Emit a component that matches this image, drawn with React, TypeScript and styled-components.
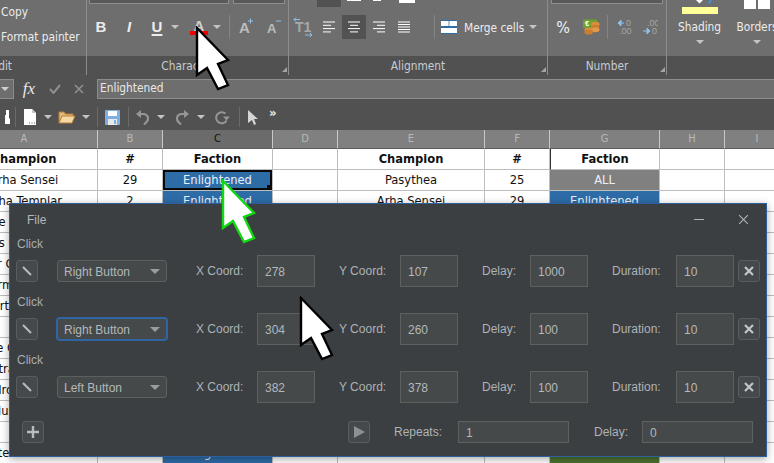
import styled, { createGlobalStyle } from "styled-components";

/**
 * Types
 */
type Fill = "blue" | "gray" | "green";

type CellData = {
  text?: string;
  fill?: Fill;
};

type SheetRow = CellData[];

/**
 * Data
 */
const columns = ["A", "B", "C", "D", "E", "F", "G", "H", "I"];
const columnWidths = [147, 65, 110, 65, 147, 65, 110, 65, 65];

const blue = (text: string): CellData => ({ text, fill: "blue" });
const left = (text: string): SheetRow => [{ text }];

const rows: SheetRow[] = [
  [{ text: "Arha Sensei" }, { text: "29" }, blue("Enlightened"), {}, { text: "Pasythea" }, { text: "25" }, { text: "ALL", fill: "gray" }],
  [{ text: "Arha Templar" }, { text: "2" }, blue("Enlightened"), {}, { text: "Arha Sensei" }, { text: "29" }, blue("Enlightened")],
  left("Blade Knight Lord"),
  left("Elders Crusader Elf"),
  left("Elder Crusader Elf"),
  left("Storm Guardian"),
  left("Mort Guardian"),
  [],
  left("Blade Crusader Elf"),
  left("Astral Warrior"),
  left("Wild Ironclad Rider"),
  left("Julius Hunters"),
  [],
  [{ text: "Master Shartha II" }, { text: "2" }, blue("Enlightened"), {}, { text: "Nut" }, { text: "5" }, { text: "Exabound", fill: "green" }],
];

const fillColors: Record<Fill, string> = {
  blue: "#2e6ca8",
  gray: "#808080",
  green: "#4d7330",
};

const clickRows = [
  { button: "Right Button", x: "278", y: "107", delay: "1000", focused: false },
  { button: "Right Button", x: "304", y: "260", delay: "100", focused: true },
  { button: "Left Button", x: "382", y: "378", delay: "100", focused: false },
];

/**
 * Styled
 */
const GlobalStyle = createGlobalStyle`
  html, body {
    margin: 0;
    padding: 0;
    background: #515151;
  }
`;

const Page = styled.div`
  position: relative;
  width: 774px;
  height: 463px;
  overflow: hidden;
  font-family: "DejaVu Sans", sans-serif;
  font-stretch: condensed;
  font-size: 11.8px;
`;

const Ribbon = styled.div`
  display: flex;
  height: 79px;
  box-sizing: border-box;
  padding-bottom: 4px;
  background: #515151;
  overflow: hidden;
`;

const Group = styled.div<{ $width: number; $last?: boolean }>`
  flex: none;
  display: flex;
  flex-direction: column;
  width: ${(p) => p.$width}px;
  box-sizing: content-box;
  border-right: ${(p) => (p.$last ? "none" : "1px solid #8c8c8c")};
`;

const GroupBody = styled.div`
  height: 56px;
  background: #6e6e6e;
`;

const GroupLabel = styled.div`
  position: relative;
  height: 19px;
  line-height: 20px;
  text-align: center;
  color: #c6ccd2;
  white-space: nowrap;
  overflow: hidden;
`;

const EditLabel = styled(GroupLabel)`
  display: flex;
  justify-content: flex-end;
  padding-right: 74px;
`;

const Launcher = styled.span`
  position: absolute;
  right: 1px;
  bottom: 3px;
  width: 0;
  height: 0;
  border-left: 5px solid transparent;
  border-bottom: 5px solid #a5a5a5;
`;

const Strip = styled.div`
  display: flex;
  align-items: flex-start;
  height: 9px;
`;

const ComboEdge = styled.div<{ $width: number; $ml: number }>`
  width: ${(p) => p.$width}px;
  height: 4px;
  margin-left: ${(p) => p.$ml}px;
  box-sizing: border-box;
  background: #5a5a5a;
  border: 1px solid #8e8e8e;
  border-top: none;
`;

const StripBit = styled.div<{ $width: number; $height: number; $ml: number; $color: string }>`
  width: ${(p) => p.$width}px;
  height: ${(p) => p.$height}px;
  margin-left: ${(p) => p.$ml}px;
  background: ${(p) => p.$color};
`;

const MainRow = styled.div`
  display: flex;
  align-items: center;
  height: 36px;
`;

const Tool = styled.div<{ $width: number; $ml?: number; $active?: boolean }>`
  flex: none;
  display: flex;
  align-items: center;
  justify-content: center;
  width: ${(p) => p.$width}px;
  height: 24px;
  margin-left: ${(p) => p.$ml || 0}px;
  background: ${(p) => (p.$active ? "#525252" : "transparent")};
  color: #ececec;
`;

const FontGlyph = styled.span<{ $italic?: boolean; $underline?: boolean }>`
  margin-top: -2px;
  font-family: "Liberation Sans", sans-serif;
  font-size: 15px;
  font-weight: 700;
  font-style: ${(p) => (p.$italic ? "italic" : "normal")};
  text-decoration: ${(p) => (p.$underline ? "underline" : "none")};
  text-underline-offset: 2px;
  text-decoration-thickness: 2px;
`;

const ColorGlyph = styled.div`
  position: relative;
  margin-top: -3px;
  font-family: "Liberation Sans", sans-serif;
  font-size: 15px;
  font-weight: 700;
  color: #cfcfcf;
  line-height: 17px;
`;

const ColorBar = styled.div`
  position: absolute;
  left: -4px;
  top: 14px;
  width: 18px;
  height: 4px;
  background: #f00000;
`;

const PercentGlyph = styled.span`
  font-size: 16px;
  color: #f0f0f0;
`;

const MergeLabel = styled.span`
  margin: 2px 0 0 7px;
  color: #ececec;
  white-space: nowrap;
`;

const ToolSep = styled.div<{ $ml: number; $height?: number; $color?: string }>`
  flex: none;
  width: 1px;
  height: ${(p) => p.$height || 24}px;
  margin-left: ${(p) => p.$ml}px;
  background: ${(p) => p.$color || "#848484"};
`;

const Caret = styled.span<{ $ml?: number; $color?: string; $size?: number }>`
  flex: none;
  width: 0;
  height: 0;
  margin-left: ${(p) => p.$ml || 0}px;
  border-left: ${(p) => p.$size || 4}px solid transparent;
  border-right: ${(p) => p.$size || 4}px solid transparent;
  border-top: ${(p) => p.$size || 4}px solid ${(p) => p.$color || "#c4c4c4"};
`;

const ClipboardList = styled.div`
  display: flex;
  flex-direction: column;
  gap: 8px;
  padding: 4px 0 0 1px;
  color: #ececec;
  white-space: nowrap;
  line-height: 17px;
`;

const BigTools = styled.div`
  display: flex;
`;

const BigTool = styled.div<{ $width: number }>`
  flex: none;
  display: flex;
  flex-direction: column;
  align-items: center;
  width: ${(p) => p.$width}px;
  color: #ececec;
`;

const BigIconArea = styled.div`
  display: flex;
  justify-content: center;
  height: 17px;
`;

const BigLabel = styled.div`
  height: 20px;
  line-height: 20px;
  white-space: nowrap;
`;

const BigCaret = styled(Caret)`
  margin-top: 3px;
`;

const FormulaBar = styled.div`
  display: flex;
  align-items: flex-start;
  height: 21px;
  background: #515151;
`;

const NameBox = styled.div`
  flex: none;
  display: flex;
  align-items: center;
  justify-content: center;
  width: 14px;
  height: 20px;
  box-sizing: border-box;
  padding-right: 3px;
  background: #6e6e6e;
  border: 1px solid #8c8c8c;
  border-left: none;
`;

const FormulaTool = styled.div<{ $width: number }>`
  flex: none;
  display: flex;
  align-items: center;
  justify-content: center;
  width: ${(p) => p.$width}px;
  height: 20px;
`;

const FxGlyph = styled.span`
  font-family: "Liberation Serif", serif;
  font-style: italic;
  font-size: 17px;
  color: #e8e8e8;
`;

const FormulaInput = styled.div`
  flex: 1;
  height: 20px;
  box-sizing: border-box;
  padding-left: 2px;
  line-height: 17px;
  color: #e8e8e8;
  background: #6e6e6e;
  border: 1px solid #8c8c8c;
  border-right: none;
`;

const QuickBar = styled.div`
  display: flex;
  align-items: center;
  height: 30px;
  box-sizing: border-box;
  padding-top: 4px;
  background: #515151;
`;

const Slot = styled.div<{ $width: number }>`
  flex: none;
  display: flex;
  align-items: center;
  justify-content: center;
  width: ${(p) => p.$width}px;
  height: 22px;
`;

const MoreGlyph = styled.span`
  margin: -8px 0 0 3px;
  font-size: 13px;
  font-weight: 700;
  color: #eeeeee;
  line-height: 14px;
`;

const Sheet = styled.div`
  display: grid;
  grid-template-columns: ${columnWidths.map((w) => `${w}px`).join(" ")};
  grid-auto-rows: 21px;
  width: 839px;
  margin-left: -49px;
  background: #ffffff;
`;

const ColumnHead = styled.div<{ $active?: boolean }>`
  height: 19px;
  box-sizing: border-box;
  text-align: center;
  line-height: 18px;
  font-size: 11px;
  color: ${(p) => (p.$active ? "#111111" : "#b9b9b9")};
  background: ${(p) => (p.$active ? "#6b6b6b" : "#808080")};
  border-right: 1px solid #c8c8c8;
  border-bottom: 1px solid #5c5c5c;
`;

const HeadRow = styled.div`
  display: grid;
  grid-template-columns: ${columnWidths.map((w) => `${w}px`).join(" ")};
  width: 839px;
  margin-left: -49px;
`;

const Cell = styled.div<{ $fill?: Fill; $bold?: boolean; $markLeft?: boolean; $selected?: boolean }>`
  position: relative;
  box-sizing: border-box;
  overflow: hidden;
  text-align: center;
  white-space: nowrap;
  font-size: 12.8px;
  line-height: 19px;
  font-weight: ${(p) => (p.$bold ? 700 : 400)};
  color: ${(p) => (p.$fill ? "#e9f0f6" : "#111111")};
  background: ${(p) => (p.$fill ? fillColors[p.$fill] : "#ffffff")};
  border-right: 1px solid #bdbdbd;
  border-bottom: 1px solid #bdbdbd;
  border-left: ${(p) => (p.$markLeft ? "1px solid #333333" : "none")};
  ${(p) => (p.$selected ? "box-shadow: inset 0 0 0 2px #0a0a0a;" : "")}
`;

const CellHandle = styled.span`
  position: absolute;
  right: 0;
  bottom: 0;
  width: 5px;
  height: 5px;
  background: #0a0a0a;
`;

const Dialog = styled.div`
  position: absolute;
  left: 9px;
  top: 203px;
  width: 758px;
  height: 254px;
  box-sizing: border-box;
  background: #3c3f41;
  border: 1px solid #2d5f9a;
  box-shadow: 0 2px 8px rgba(0, 0, 0, 0.35);
  font-family: "Liberation Sans", sans-serif;
  font-stretch: normal;
  font-size: 12px;
  color: #adb2b6;
`;

const TitleBar = styled.div`
  display: flex;
  align-items: center;
  height: 25px;
  box-sizing: border-box;
  padding: 6px 17px 0 17px;
`;

const MenuLabel = styled.span`
  color: #b4b8bb;
`;

const WindowButtons = styled.div`
  display: flex;
  align-items: center;
  gap: 34px;
  margin-left: auto;
`;

const ClickLabel = styled.div`
  height: 26px;
  box-sizing: border-box;
  padding: 5px 0 0 7px;
  line-height: 20px;
  color: #a8adb1;
`;

const ClickRow = styled.div`
  display: grid;
  grid-template-columns: 41px 110px 90px 58px 85px 58px 72px 58px 88px 58px 26px;
  align-items: center;
  height: 32px;
  padding-left: 6px;
`;

const IconButton = styled.div`
  display: flex;
  align-items: center;
  justify-content: center;
  width: 22px;
  height: 22px;
  box-sizing: border-box;
  background: #46494b;
  border: 1px solid #5a5d5f;
  border-radius: 3px;
`;

const RemoveCell = styled.div`
  display: flex;
  justify-content: flex-end;
`;

const SelectBox = styled.div<{ $focused?: boolean }>`
  display: flex;
  align-items: center;
  justify-content: space-between;
  height: 22px;
  box-sizing: border-box;
  padding: 1px 6px 0 6px;
  color: #b4b8bb;
  background: #45494a;
  border: 1px solid ${(p) => (p.$focused ? "#2f65a0" : "#5e6060")};
  border-radius: 3px;
  ${(p) => (p.$focused ? "box-shadow: 0 0 0 1px #2f65a0;" : "")}
`;

const FieldLabel = styled.div<{ $pad: number }>`
  padding-left: ${(p) => p.$pad}px;
  white-space: nowrap;
`;

const Field = styled.div`
  height: 32px;
  box-sizing: border-box;
  padding: 1px 0 0 7px;
  line-height: 30px;
  color: #b4b8bb;
  background: #45494a;
  border: 1px solid #5e6060;
`;

const Footer = styled.div`
  display: flex;
  align-items: center;
  justify-content: space-between;
  height: 22px;
  margin-top: 18px;
  padding: 0 13px 0 12px;
`;

const FooterRight = styled.div`
  display: flex;
  align-items: center;
`;

const FooterLabel = styled.div<{ $width: number; $pad: number }>`
  width: ${(p) => p.$width}px;
  box-sizing: border-box;
  padding-left: ${(p) => p.$pad}px;
`;

const FooterField = styled(Field)`
  width: 111px;
  height: 22px;
  line-height: 20px;
`;

const CursorMark = styled.svg<{ $left: number; $top: number }>`
  position: absolute;
  left: ${(p) => p.$left}px;
  top: ${(p) => p.$top}px;
`;

/**
 * Icons
 */
const Cursor = ({ left: x, top, stroke }: { left: number; top: number; stroke: string }) => (
  <CursorMark $left={x - 2} $top={top - 2} width="38" height="66" viewBox="-2 -2 38 66">
    <polygon
      points="0,0 31,32 21,36 31,57 21,61 10,40 0,47"
      fill="#ffffff"
      stroke={stroke}
      strokeWidth="2.4"
      strokeLinejoin="miter"
    />
  </CursorMark>
);

const AlignIcon = ({ mode }: { mode: "left" | "center" | "right" | "justify" }) => {
  const widths = mode === "justify" ? [12, 12, 12, 12, 12] : [12, 8, 12, 8];
  return (
    <svg width="12" height="12" viewBox="0 0 12 12">
      {widths.map((w, i) => {
        const x = mode === "center" ? (12 - w) / 2 : mode === "right" ? 12 - w : 0;
        const step = mode === "justify" ? 2.5 : 3.3;
        return <rect key={i} x={x} y={0.5 + i * step} width={w} height="1" fill="#ffffff" />;
      })}
    </svg>
  );
};

const SpacingIcon = () => (
  <svg width="20" height="20" viewBox="0 0 20 20">
    <text x="2" y="15" fontFamily="Liberation Sans" fontWeight="700" fontSize="14" fill="#a8a8a8">
      T1
    </text>
    <path d="M1 2.5h6M1 2.5l2-2M1 2.5l2 2" stroke="#8cc0ea" fill="none" />
    <path d="M12 18h7M19 18l-2-2M19 18l-2 2" stroke="#8cc0ea" fill="none" />
  </svg>
);

const GrowIcon = ({ mark }: { mark: "+" | "-" }) => (
  <svg width="20" height="18" viewBox="0 0 20 18">
    <text x="4" y="15" fontFamily="Liberation Sans" fontWeight="700" fontSize={mark === "+" ? 15 : 13} fill="#bdbdbd">
      A
    </text>
    {mark === "+" ? (
      <path d="M13 3h5M15.5 0.5v5" stroke="#8cc0ea" />
    ) : (
      <path d="M13 3h5" stroke="#8cc0ea" />
    )}
  </svg>
);

const MergeIcon = () => (
  <svg width="16" height="14" viewBox="0 0 16 14">
    <rect x="0" y="0" width="16" height="14" fill="#ffffff" />
    <rect x="0" y="0" width="16" height="1" fill="#2d6da8" />
    <rect x="0" y="13" width="16" height="1" fill="#2d6da8" />
    <rect x="0" y="6" width="16" height="2" fill="#2d6da8" />
    <rect x="7.5" y="1" width="1" height="5" fill="#7d8a95" />
  </svg>
);

const CoinsIcon = () => (
  <svg width="18" height="16" viewBox="0 0 18 16">
    <rect x="0" y="0" width="15" height="9" fill="#6ca12e" />
    <text x="2" y="7" fontFamily="Liberation Sans" fontWeight="700" fontSize="8" fill="#ffffff">
      €
    </text>
    <ellipse cx="13" cy="5" rx="4.5" ry="2.5" fill="#d98f3f" />
    <ellipse cx="13" cy="8" rx="4.5" ry="2.5" fill="#c97f2f" />
    <ellipse cx="13" cy="11" rx="4.5" ry="2.5" fill="#e09a4c" />
    <ellipse cx="6" cy="11" rx="4.5" ry="2.5" fill="#d98f3f" />
    <ellipse cx="6" cy="13.5" rx="4.5" ry="2.5" fill="#c97f2f" />
  </svg>
);

const DecimalIcon = ({ grow }: { grow: boolean }) => (
  <svg width="16" height="16" viewBox="0 0 16 16">
    <text x={grow ? 10 : 5} y="7" fontFamily="Liberation Sans" fontSize="9" fill="#a6a6a6">
      {grow ? "0" : ".00"}
    </text>
    <text x={grow ? 3 : 10} y="15" fontFamily="Liberation Sans" fontSize="9" fill="#a6a6a6">
      {grow ? ".00" : "0"}
    </text>
    {grow ? (
      <path d="M8 4H3M2 4l3-3v6z" stroke="#8cc0ea" fill="#8cc0ea" />
    ) : (
      <path d="M1 12h5M8 12l-3-3v6z" stroke="#8cc0ea" fill="#8cc0ea" />
    )}
  </svg>
);

const CheckIcon = () => (
  <svg width="12" height="10" viewBox="0 0 12 10">
    <path d="M1 5l3.5 4L11 1" stroke="#8f8f8f" strokeWidth="2" fill="none" />
  </svg>
);

const CrossIcon = ({ size, color, weight }: { size: number; color: string; weight: number }) => (
  <svg width={size} height={size} viewBox="0 0 10 10">
    <path d="M1 1l8 8M9 1l-8 8" stroke={color} strokeWidth={weight} fill="none" />
  </svg>
);

const HandIcon = () => (
  <svg width="5" height="16" viewBox="0 0 5 16">
    <path d="M-3 6h4V1h3v8l1 1v5h-8z" fill="#ffffff" />
  </svg>
);

const DocIcon = () => (
  <svg width="12" height="16" viewBox="0 0 12 16">
    <path d="M0 0h8l4 4v12H0z" fill="#ffffff" />
    <path d="M8 0v4h4" fill="#c9c9c9" />
    <path d="M5 14h1M7.5 14h1M10 14h1" stroke="#555555" />
  </svg>
);

const FolderIcon = () => (
  <svg width="18" height="14" viewBox="0 0 18 14">
    <path d="M1 13V2h5l1.5 2H15v2" fill="#e5b778" stroke="#b57f3a" />
    <path d="M1 13l3-7h13l-3 7z" fill="#f6d9a2" stroke="#b57f3a" />
  </svg>
);

const SaveIcon = () => (
  <svg width="15" height="15" viewBox="0 0 15 15">
    <rect width="15" height="15" rx="1" fill="#7faee3" />
    <rect x="3" y="1" width="9" height="5" fill="#ffffff" />
    <rect x="3" y="9" width="9" height="6" fill="#e8e8e8" />
    <rect x="9" y="10" width="2" height="4" fill="#7faee3" />
  </svg>
);

const UndoIcon = ({ flip }: { flip?: boolean }) => (
  <svg width="14" height="15" viewBox="0 0 14 15" transform={flip ? "scale(-1 1)" : undefined}>
    <path d="M3 4h4.5a4.6 4.6 0 0 1 3 8L8 14.5" stroke="#969696" strokeWidth="2.2" fill="none" />
    <path d="M5 0v8L0 4z" fill="#969696" />
  </svg>
);

const RepeatIcon = () => (
  <svg width="16" height="15" viewBox="0 0 16 15">
    <path d="M11.5 3.6A5.6 5.6 0 1 0 12.6 10.5" stroke="#969696" strokeWidth="2" fill="none" />
    <path d="M9 6.5h7l-3.5 4z" fill="#969696" />
  </svg>
);

const PointerIcon = () => (
  <svg width="10" height="15" viewBox="0 0 10 15">
    <path d="M0 0l10 9H6l2 5-2 1-2-5-4 3z" fill="#d5d5d5" />
  </svg>
);

const WandIcon = () => (
  <svg width="10" height="10" viewBox="0 0 10 10">
    <path d="M1 1l8 8" stroke="#b9bcbe" strokeWidth="2" />
  </svg>
);

const PlusIcon = () => (
  <svg width="12" height="12" viewBox="0 0 12 12">
    <path d="M6 0v12M0 6h12" stroke="#b9bcbe" strokeWidth="2.4" />
  </svg>
);

const PlayIcon = () => (
  <svg width="11" height="12" viewBox="0 0 11 12">
    <path d="M0 0l11 6-11 6z" fill="#8d9092" />
  </svg>
);

const MinimizeIcon = () => (
  <svg width="10" height="3" viewBox="0 0 10 3">
    <path d="M0 1.5h10" stroke="#b0b4b7" />
  </svg>
);

/**
 * Component for the spreadsheet window with the click recorder dialog on top.
 */
const App = () => {
  return (
    <Page>
      <GlobalStyle />
      <Ribbon>
        <Group $width={86}>
          <GroupBody>
            <ClipboardList>
              <span>Copy</span>
              <span>Format painter</span>
            </ClipboardList>
          </GroupBody>
          <EditLabel>Edit</EditLabel>
        </Group>
        <Group $width={201}>
          <GroupBody>
            <Strip>
              <ComboEdge $width={140} $ml={2} />
              <ComboEdge $width={52} $ml={4} />
            </Strip>
            <MainRow>
              <Tool $width={28}>
                <FontGlyph>B</FontGlyph>
              </Tool>
              <Tool $width={28}>
                <FontGlyph $italic>I</FontGlyph>
              </Tool>
              <Tool $width={28}>
                <FontGlyph $underline>U</FontGlyph>
              </Tool>
              <Caret />
              <Tool $width={28} $ml={6}>
                <ColorGlyph>
                  A
                  <ColorBar />
                </ColorGlyph>
              </Tool>
              <Caret />
              <ToolSep $ml={8} />
              <Tool $width={26} $ml={2}>
                <GrowIcon mark="+" />
              </Tool>
              <Tool $width={26} $ml={2}>
                <GrowIcon mark="-" />
              </Tool>
            </MainRow>
          </GroupBody>
          <GroupLabel>
            Character
            <Launcher />
          </GroupLabel>
        </Group>
        <Group $width={258}>
          <GroupBody>
            <Strip>
              <StripBit $width={24} $height={7} $ml={28} $color="#525252" />
              <StripBit $width={14} $height={1} $ml={6} $color="#ffffff" />
              <StripBit $width={8} $height={1} $ml={12} $color="#ffffff" />
              <StripBit $width={16} $height={3} $ml={18} $color="#ffffff" />
            </Strip>
            <MainRow>
              <Tool $width={27}>
                <SpacingIcon />
              </Tool>
              <Tool $width={25}>
                <AlignIcon mode="left" />
              </Tool>
              <Tool $width={24} $ml={1} $active>
                <AlignIcon mode="center" />
              </Tool>
              <Tool $width={25}>
                <AlignIcon mode="right" />
              </Tool>
              <Tool $width={26}>
                <AlignIcon mode="justify" />
              </Tool>
              <ToolSep $ml={17} />
              <Tool $width={16} $ml={6}>
                <MergeIcon />
              </Tool>
              <MergeLabel>Merge cells</MergeLabel>
              <Caret $ml={5} />
            </MainRow>
          </GroupBody>
          <GroupLabel>
            Alignment
            <Launcher />
          </GroupLabel>
        </Group>
        <Group $width={118}>
          <GroupBody>
            <Strip>
              <ComboEdge $width={112} $ml={3} />
            </Strip>
            <MainRow>
              <Tool $width={30}>
                <PercentGlyph>%</PercentGlyph>
              </Tool>
              <Tool $width={17} $ml={5}>
                <CoinsIcon />
              </Tool>
              <ToolSep $ml={7} />
              <Tool $width={26} $ml={3}>
                <DecimalIcon grow />
              </Tool>
              <Tool $width={26}>
                <DecimalIcon grow={false} />
              </Tool>
            </MainRow>
          </GroupBody>
          <GroupLabel>
            Number
            <Launcher />
          </GroupLabel>
        </Group>
        <Group $width={120} $last>
          <GroupBody>
            <BigTools>
              <BigTool $width={65}>
                <BigIconArea>
                  <svg width="36" height="14" viewBox="0 0 36 14">
                    <path d="M14 0h7l-3.5 3.5z" fill="#ffffff" />
                    <path d="M26 3l2-3h2l-2 4z" fill="#3f8fd8" />
                    <rect y="7" width="36" height="7" fill="#ffff99" />
                  </svg>
                </BigIconArea>
                <BigLabel>Shading</BigLabel>
                <BigCaret />
              </BigTool>
              <BigTool $width={50}>
                <BigIconArea>
                  <svg width="26" height="9" viewBox="0 0 26 9">
                    <rect width="12" height="9" fill="#ffffff" />
                    <rect x="14" width="12" height="9" fill="#ffffff" />
                  </svg>
                </BigIconArea>
                <BigLabel>Borders</BigLabel>
                <BigCaret />
              </BigTool>
            </BigTools>
          </GroupBody>
        </Group>
      </Ribbon>

      <FormulaBar>
        <NameBox>
          <Caret $color="#d0d0d0" />
        </NameBox>
        <FormulaTool $width={30}>
          <FxGlyph>fx</FxGlyph>
        </FormulaTool>
        <FormulaTool $width={22}>
          <CheckIcon />
        </FormulaTool>
        <FormulaTool $width={26}>
          <CrossIcon size={10} color="#8f8f8f" weight={1.6} />
        </FormulaTool>
        <Slot $width={5} />
        <FormulaInput>Enlightened</FormulaInput>
      </FormulaBar>

      <QuickBar>
        <Slot $width={15}>
          <HandIcon />
        </Slot>
        <ToolSep $ml={0} $height={20} $color="#6a6a6a" />
        <Slot $width={28}>
          <DocIcon />
        </Slot>
        <Slot $width={8}>
          <Caret />
        </Slot>
        <Slot $width={30}>
          <FolderIcon />
        </Slot>
        <Slot $width={8}>
          <Caret />
        </Slot>
        <ToolSep $ml={7} $height={20} $color="#6a6a6a" />
        <Slot $width={29}>
          <SaveIcon />
        </Slot>
        <ToolSep $ml={1} $height={20} $color="#6a6a6a" />
        <Slot $width={27}>
          <UndoIcon />
        </Slot>
        <Slot $width={10}>
          <Caret />
        </Slot>
        <Slot $width={31}>
          <UndoIcon flip />
        </Slot>
        <Slot $width={8}>
          <Caret />
        </Slot>
        <Slot $width={34}>
          <RepeatIcon />
        </Slot>
        <ToolSep $ml={0} $height={20} $color="#6a6a6a" />
        <Slot $width={26}>
          <PointerIcon />
        </Slot>
        <MoreGlyph>»</MoreGlyph>
      </QuickBar>

      <HeadRow>
        {columns.map((name) => (
          <ColumnHead key={name} $active={name === "C"}>
            {name}
          </ColumnHead>
        ))}
      </HeadRow>
      <Sheet>
        {columns.map((name, i) => (
          <Cell key={name} $bold $markLeft={name === "G"}>
            {["Champion", "#", "Faction", "", "Champion", "#", "Faction", "", ""][i]}
          </Cell>
        ))}
        {rows.map((row, r) =>
          columns.map((name, c) => (
            <Cell key={`${r}-${name}`} $fill={row[c]?.fill} $selected={r === 0 && c === 2}>
              {row[c]?.text}
              {r === 0 && c === 2 && <CellHandle />}
            </Cell>
          )),
        )}
      </Sheet>

      <Dialog>
        <TitleBar>
          <MenuLabel>File</MenuLabel>
          <WindowButtons>
            <MinimizeIcon />
            <CrossIcon size={11} color="#b0b4b7" weight={1} />
          </WindowButtons>
        </TitleBar>
        {clickRows.map((row, i) => (
          <div key={i}>
            <ClickLabel>Click</ClickLabel>
            <ClickRow>
              <IconButton>
                <WandIcon />
              </IconButton>
              <SelectBox $focused={row.focused}>
                {row.button}
                <Caret $color="#9a9da0" $size={5} />
              </SelectBox>
              <FieldLabel $pad={29}>X Coord:</FieldLabel>
              <Field>{row.x}</Field>
              <FieldLabel $pad={24}>Y Coord:</FieldLabel>
              <Field>{row.y}</Field>
              <FieldLabel $pad={24}>Delay:</FieldLabel>
              <Field>{row.delay}</Field>
              <FieldLabel $pad={24}>Duration:</FieldLabel>
              <Field>10</Field>
              <RemoveCell>
                <IconButton>
                  <CrossIcon size={10} color="#c3c6c8" weight={2.2} />
                </IconButton>
              </RemoveCell>
            </ClickRow>
          </div>
        ))}
        <Footer>
          <IconButton>
            <PlusIcon />
          </IconButton>
          <FooterRight>
            <IconButton>
              <PlayIcon />
            </IconButton>
            <FooterLabel $width={88} $pad={24}>
              Repeats:
            </FooterLabel>
            <FooterField>1</FooterField>
            <FooterLabel $width={73} $pad={25}>
              Delay:
            </FooterLabel>
            <FooterField>0</FooterField>
          </FooterRight>
        </Footer>
      </Dialog>

      <Cursor left={197} top={28} stroke="#000000" />
      <Cursor left={223} top={181} stroke="#12d812" />
      <Cursor left={301} top={298} stroke="#000000" />
    </Page>
  );
};

export default App;
